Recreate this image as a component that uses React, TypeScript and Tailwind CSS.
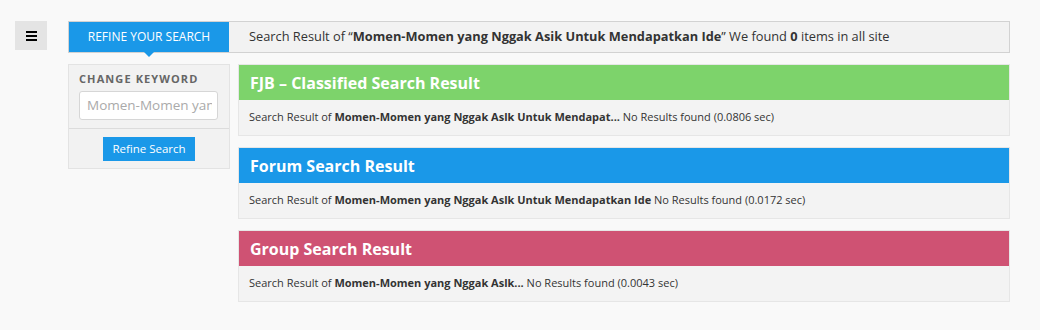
import React from "react";

const font = { fontFamily: '"Open Sans", "Noto Sans", Arial, sans-serif' };

function Panel({ title, color, keyword, time }: { title: string; color: string; keyword: string; time: string }) {
  return (
    <div className="border border-[#e6e6e6]">
      <div className={`h-[35px] ${color} flex items-center pl-[11px] text-white font-bold text-[16px]`}>{title}</div>
      <div className="h-[35px] bg-[#f3f3f3] flex items-center pl-[10px] text-[11px] text-[#333]">
        <span>
          Search Result of <b>{keyword}</b> No Results found ({time} sec)
        </span>
      </div>
    </div>
  );
}

export default function App() {
  return (
    <div className="min-h-[330px] w-[1040px] bg-[#f9f9f9] flex items-start pt-[21px] pl-[15px]" style={font}>
      <div className="w-[32px] h-[29px] bg-[#e4e4e4] flex items-center justify-center">
        <div className="flex flex-col gap-[2px]">
          <div className="w-[11px] h-[2px] bg-black" />
          <div className="w-[11px] h-[2px] bg-black" />
          <div className="w-[11px] h-[2px] bg-black" />
        </div>
      </div>
      <div className="ml-[21px] w-[942px]">
        <div className="h-[32px] border border-[#d2d2d2] bg-[#f2f2f2] flex items-stretch">
          <div className="relative w-[160px] bg-[#1a98e8] text-white text-[12px] flex items-center justify-center">
            REFINE YOUR SEARCH
            <div className="absolute left-[75px] -bottom-[5px] w-0 h-0 border-l-[5px] border-r-[5px] border-t-[5px] border-l-transparent border-r-transparent border-t-[#1a98e8]" />
          </div>
          <div className="pl-[20px] flex items-center text-[12.8px] text-[#333]">
            <span>
              Search Result of “<b>Momen-Momen yang Nggak Asik Untuk Mendapatkan Ide</b>” We found <b>0</b> items in all site
            </span>
          </div>
        </div>
        <div className="mt-[11px] flex items-start gap-[8px]">
          <div className="w-[162px] h-[105px] border border-[#e3e3e3] bg-[#f2f2f2] flex flex-col">
            <div className="px-[10px] pt-[7px]">
              <div className="text-[11px] font-bold tracking-[1.1px] text-[#666] leading-[14px]">CHANGE KEYWORD</div>
              <div className="mt-[5px] w-[139px] h-[29px] bg-white border border-[#d6d6d6] rounded-[3px] flex items-center pl-[7px]">
                <div className="w-[125px] overflow-hidden whitespace-nowrap text-[13.5px] text-[#aaa]">Momen-Momen yang Nggak Asik</div>
              </div>
            </div>
            <div className="mt-[8px] border-t border-[#dcdcdc] flex justify-center pt-[8px]">
              <div className="w-[92px] h-[24px] bg-[#1a98e8] text-white text-[11.5px] flex items-center justify-center">Refine Search</div>
            </div>
          </div>
          <div className="w-[772px] flex flex-col gap-[11px]">
            <Panel title="FJB – Classified Search Result" color="bg-[#7dd36b]" keyword="Momen-Momen yang Nggak Aslk Untuk Mendapat... " time="0.0806" />
            <Panel title="Forum Search Result" color="bg-[#1a98e8]" keyword="Momen-Momen yang Nggak Aslk Untuk Mendapatkan Ide" time="0.0172" />
            <Panel title="Group Search Result" color="bg-[#cf5273]" keyword="Momen-Momen yang Nggak Aslk..." time="0.0043" />
          </div>
        </div>
      </div>
    </div>
  );
}
